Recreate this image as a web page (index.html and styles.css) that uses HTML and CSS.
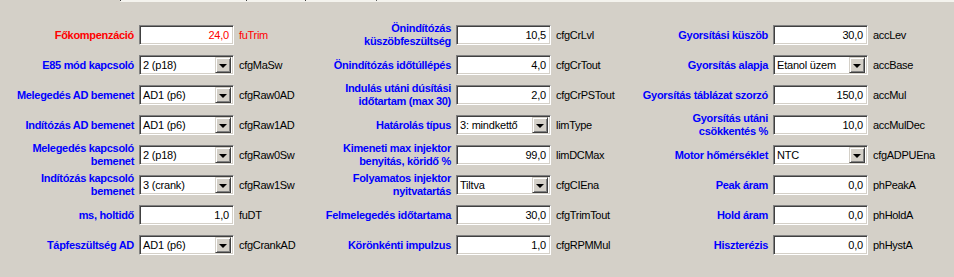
FILE: index.html
```html
<!DOCTYPE html>
<html lang="hu">
<head>
<meta charset="utf-8">
<title>Beállítások</title>
<link rel="stylesheet" href="styles.css">
</head>
<body>
<div class="tabstrip">
  <span class="tab w1"></span>
  <span class="tab w2"></span>
  <span class="tab w3"></span>
  <span class="tab w4"></span>
</div>
<div class="form">
  <section class="col col1">
    <label class="lbl red">Főkompenzáció</label>
    <div class="ctl num red">24,0</div>
    <span class="var red">fuTrim</span>

    <label class="lbl">E85 mód kapcsoló</label>
    <div class="ctl sel"><span class="val">2 (p18)</span><span class="btn"><span class="tri"></span></span></div>
    <span class="var">cfgMaSw</span>

    <label class="lbl">Melegedés AD bemenet</label>
    <div class="ctl sel"><span class="val">AD1 (p6)</span><span class="btn"><span class="tri"></span></span></div>
    <span class="var">cfgRaw0AD</span>

    <label class="lbl">Indítózás AD bemenet</label>
    <div class="ctl sel"><span class="val">AD1 (p6)</span><span class="btn"><span class="tri"></span></span></div>
    <span class="var">cfgRaw1AD</span>

    <label class="lbl">Melegedés kapcsoló<br>bemenet</label>
    <div class="ctl sel"><span class="val">2 (p18)</span><span class="btn"><span class="tri"></span></span></div>
    <span class="var">cfgRaw0Sw</span>

    <label class="lbl">Indítózás kapcsoló<br>bemenet</label>
    <div class="ctl sel"><span class="val">3 (crank)</span><span class="btn"><span class="tri"></span></span></div>
    <span class="var">cfgRaw1Sw</span>

    <label class="lbl">ms, holtidő</label>
    <div class="ctl num">1,0</div>
    <span class="var">fuDT</span>

    <label class="lbl">Tápfeszültség AD</label>
    <div class="ctl sel"><span class="val">AD1 (p6)</span><span class="btn"><span class="tri"></span></span></div>
    <span class="var">cfgCrankAD</span>
  </section>

  <section class="col col2">
    <label class="lbl">Önindítózás<br>küszöbfeszültség</label>
    <div class="ctl num">10,5</div>
    <span class="var">cfgCrLvl</span>

    <label class="lbl">Önindítózás időtúllépés</label>
    <div class="ctl num">4,0</div>
    <span class="var">cfgCrTout</span>

    <label class="lbl">Indulás utáni dúsítási<br>időtartam (max 30)</label>
    <div class="ctl num">2,0</div>
    <span class="var">cfgCrPSTout</span>

    <label class="lbl">Határolás típus</label>
    <div class="ctl sel"><span class="val">3: mindkettő</span><span class="btn"><span class="tri"></span></span></div>
    <span class="var">limType</span>

    <label class="lbl">Kimeneti max injektor<br>benyitás, köridő %</label>
    <div class="ctl num">99,0</div>
    <span class="var">limDCMax</span>

    <label class="lbl">Folyamatos injektor<br>nyitvatartás</label>
    <div class="ctl sel"><span class="val">Tiltva</span><span class="btn"><span class="tri"></span></span></div>
    <span class="var">cfgCIEna</span>

    <label class="lbl">Felmelegedés időtartama</label>
    <div class="ctl num">30,0</div>
    <span class="var">cfgTrimTout</span>

    <label class="lbl">Körönkénti impulzus</label>
    <div class="ctl num">1,0</div>
    <span class="var">cfgRPMMul</span>
  </section>

  <section class="col col3">
    <label class="lbl">Gyorsítási küszöb</label>
    <div class="ctl num">30,0</div>
    <span class="var">accLev</span>

    <label class="lbl">Gyorsítás alapja</label>
    <div class="ctl sel"><span class="val">Etanol üzem</span><span class="btn"><span class="tri"></span></span></div>
    <span class="var">accBase</span>

    <label class="lbl">Gyorsítás táblázat szorzó</label>
    <div class="ctl num">150,0</div>
    <span class="var">accMul</span>

    <label class="lbl">Gyorsítás utáni<br>csökkentés %</label>
    <div class="ctl num">10,0</div>
    <span class="var">accMulDec</span>

    <label class="lbl">Motor hőmérséklet</label>
    <div class="ctl sel"><span class="val">NTC</span><span class="btn"><span class="tri"></span></span></div>
    <span class="var">cfgADPUEna</span>

    <label class="lbl">Peak áram</label>
    <div class="ctl num">0,0</div>
    <span class="var">phPeakA</span>

    <label class="lbl">Hold áram</label>
    <div class="ctl num">0,0</div>
    <span class="var">phHoldA</span>

    <label class="lbl">Hiszterézis</label>
    <div class="ctl num">0,0</div>
    <span class="var">phHystA</span>
  </section>
</div>
</body>
</html>
```

FILE: styles.css
```css
html, body {
  margin: 0;
  padding: 0;
  background: #d4d0c8;
  width: 954px;
  height: 277px;
  overflow: hidden;
  font-family: "Liberation Sans", Arial, sans-serif;
  font-size: 11px;
  color: #000;
}

.tabstrip {
  display: flex;
  height: 2px;
  margin-left: 120px;
  background: #f4f3ee;
}
.tab {
  height: 1px;
  border-left: 1px solid #404040;
}
.w1 { width: 125px; }
.w2 { width: 58px; }
.w3 { width: 70px; }
.w4 { flex: 1; border-left-color: #606060; }

.form {
  display: flex;
  gap: 5px;
  padding-top: 18px;
}

.col {
  display: grid;
  grid-auto-rows: 30px;
  column-gap: 5px;
  align-items: center;
}
.col1 { grid-template-columns: 134px 95px 62px; }
.col2 { grid-template-columns: 145px 95px 62px; }
.col3 { grid-template-columns: 145px 95px 76px; }

.lbl {
  font-weight: bold;
  color: #0000ff;
  text-align: right;
  white-space: nowrap;
  line-height: 13px;
  letter-spacing: -0.3px;
}
.lbl.red { color: #ff0000; }

.ctl {
  box-sizing: border-box;
  height: 20px;
  background: #fff;
  border: 1px solid;
  border-color: #808080 #ffffff #ffffff #808080;
  box-shadow: inset 1px 1px 0 #404040, inset -1px -1px 0 #d4d0c8;
  line-height: 18px;
  white-space: nowrap;
  overflow: hidden;
}
.num {
  text-align: right;
  padding-right: 4px;
  letter-spacing: -0.2px;
}
.ctl.red { color: #ff0000; }

.sel {
  display: flex;
  align-items: center;
  padding: 1px 2px 1px 2px;
}
.val {
  flex: 1;
  padding-left: 1px;
  line-height: 16px;
  letter-spacing: -0.2px;
}
.btn {
  box-sizing: border-box;
  width: 16px;
  height: 16px;
  background: #d4d0c8;
  border: 1px solid;
  border-color: #d4d0c8 #404040 #404040 #d4d0c8;
  box-shadow: inset 1px 1px 0 #ffffff, inset -1px -1px 0 #808080;
  display: flex;
  align-items: center;
  justify-content: center;
}
.tri {
  width: 0;
  height: 0;
  border-left: 4px solid transparent;
  border-right: 4px solid transparent;
  border-top: 4px solid #000;
  margin-top: 1px;
}

.var {
  white-space: nowrap;
  letter-spacing: -0.3px;
}
.var.red { color: #ff0000; }
```
